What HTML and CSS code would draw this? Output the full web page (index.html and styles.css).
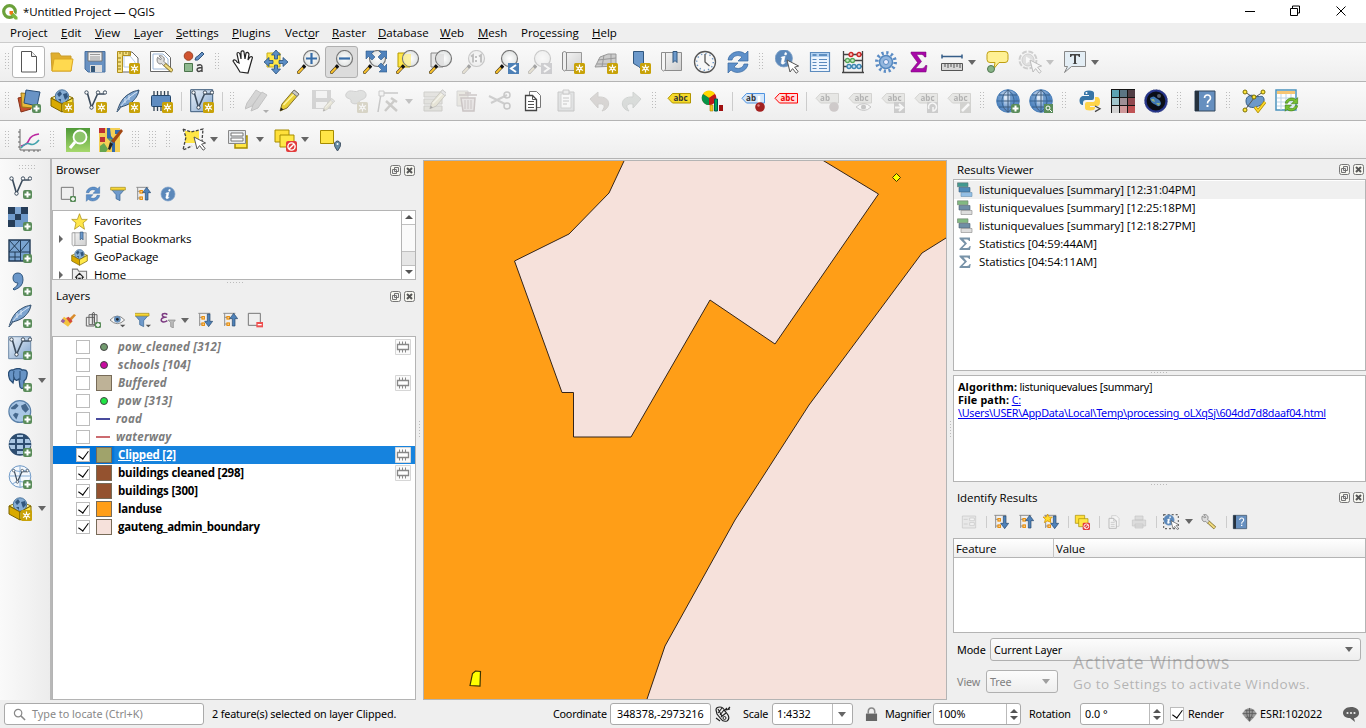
FILE: index.html
```html
<!DOCTYPE html>
<html lang="en">
<head>
<meta charset="utf-8">
<title>*Untitled Project — QGIS</title>
<link rel="stylesheet" href="styles.css">
</head>
<body>
<svg class="defs" aria-hidden="true">
<defs>
<linearGradient id="gBlue" x1="0" y1="0" x2="1" y2="1"><stop offset="0" stop-color="#eef4fb"/><stop offset="1" stop-color="#7fa3cc"/></linearGradient>
<linearGradient id="gGreen" x1="0" y1="0" x2="0" y2="1"><stop offset="0" stop-color="#4f9a38"/><stop offset="1" stop-color="#a6d86c"/></linearGradient>
<linearGradient id="gGrey" x1="0" y1="0" x2="1" y2="1"><stop offset="0" stop-color="#f4f4f4"/><stop offset="1" stop-color="#cfcfcf"/></linearGradient>
<radialGradient id="gLens"><stop offset="0" stop-color="#fff"/><stop offset="1" stop-color="#e0e3e2"/></radialGradient>
<radialGradient id="gGlobe" cx=".4" cy=".35"><stop offset="0" stop-color="#e8f1fb"/><stop offset="1" stop-color="#5b8cc6"/></radialGradient>
<g id="bstar"><rect x="13" y="13" width="11" height="11" rx="1.500" fill="#c8a208"/><path d="M18.500 14.500v8M15 16.500l7 4M22 16.500l-7 4" stroke="#fff" stroke-width="1.200"/><circle cx="18.500" cy="18.500" r="2" fill="#fff"/><circle cx="18.500" cy="18.500" r=".8" fill="#c8a208"/></g>
<g id="bplus"><rect x="15" y="15" width="9" height="9" rx="2" fill="#5a8c5a"/><path d="M19.500 16.500v6M16.500 19.500h6" stroke="#fff" stroke-width="2"/></g>
<g id="handle"><path d="M0.500 23.500L8 15.500" stroke="#3a3018" stroke-width="3.200"/><path d="M1 23L6 17.700" stroke="#f9c22e" stroke-width="2"/><path d="M6 17.500l2-2" stroke="#111" stroke-width="3.200"/></g>
<g id="lens"><use href="#handle"/><circle cx="14.500" cy="8.500" r="8" fill="url(#gLens)" stroke="#777" stroke-width="1.200"/></g>
<g id="cursor"><path d="M12 10l3 12 2.600-3.400 3.600 4.600 2-1.600-3.600-4.400 4-1.200z" fill="#fff" stroke="#555" stroke-width="1"/></g>
<g id="globe"><circle cx="12" cy="12" r="11.300" fill="url(#gGlobe)" stroke="#4a7fb8"/><path d="M12 1v22M1 12h22M3 6h18M3 18h18M12 1c-8 5-8 17 0 22M12 1c8 5 8 17 0 22" fill="none" stroke="#3f5c7c" stroke-width="1"/><path d="M4 5c-4 5-4 9 0 14l4-1V6zM14 3l6 3 2 5-8 6z" fill="#2f6cb0" opacity=".45"/></g>
<g id="world"><circle cx="12" cy="10" r="9.500" fill="#a9c7e6" stroke="#5a80a8"/><path d="M4 7l5-4 2 2-3 3-3 0zM13 5l4-2 3 5-3 3-3-3zM8 11l3 1-2 5-3-4z" fill="#45688d"/></g>
<g id="tag"><path d="M5.500 4.500h18v9.500h-18l-4.500-4.700z"/></g>
<g id="vee"><path d="M4.500 4.500l4 14 6-13.500h7" fill="none" stroke="#3b4b5c" stroke-width="1.600"/><circle cx="3.500" cy="3.500" r="1.700" fill="#fff" stroke="#3b4b5c"/><circle cx="8.500" cy="18.500" r="1.700" fill="#fff" stroke="#3b4b5c"/><circle cx="15" cy="3.500" r="1.700" fill="#fff" stroke="#3b4b5c"/><circle cx="22" cy="3.500" r="1.700" fill="#fff" stroke="#3b4b5c"/></g>
<g id="feather"><path d="M1 23C3 15 7 8 13 5c4-3 7-3 10-4-1 6-4 9-7 12-4 3-8 4-11 5z" fill="#7da4cf" stroke="#34506e"/><path d="M1 23C6 14 13 8 21 3M9 9v5M13 6v5" stroke="#dce8f5" fill="none"/><path d="M1 23l4-6" stroke="#34506e"/></g>
<g id="pencil"><path d="M2 22l2-7L16 1l5 4L9 19z" fill="#e8cf38" stroke="#81702a"/><path d="M5.500 16L18 3" stroke="#fff5a0" stroke-width="1.500"/><path d="M16 1l5 4-2 2.500-5-4z" fill="#c8c8c8" stroke="#777"/><path d="M2 22l1-3.500 2.500 2z" fill="#222"/></g>
<g id="boxg"><path d="M1 9l11-5 11 5-11 5z" fill="#fff3a0" stroke="#8a7000"/><circle cx="12" cy="7.500" r="6.700" fill="#86add4" stroke="#4d769e"/><path d="M7 5l3-3 2 3-3 3zM13 5l4-1 1 4-3 3zM8 10l3 0 0 3z" fill="#31567d"/><path d="M1 9l11 6v8L1 17z" fill="#d9aa00" stroke="#7c6400"/><path d="M12 15l11-6v8l-11 6z" fill="#ffe94a" stroke="#7c6400"/></g>
<g id="tree"><path d="M2 2h18M4 2v19M4 8h4M4 18h4" stroke="#888" stroke-width="1.400" fill="none"/><rect x="7.500" y="7" width="3.500" height="3.500" fill="#fff" stroke="#e88a00" stroke-width="1.800"/><rect x="7.500" y="16.500" width="3.500" height="3.500" fill="#fff" stroke="#e88a00" stroke-width="1.800"/></g>
<g id="down"><use href="#tree"/><path d="M15.500 3h4v11h4l-6 8-6-8h4z" fill="#4f82b9" stroke="#24466b"/></g>
<g id="up"><use href="#tree"/><path d="M15.500 21h4V10h4l-6-8-6 8h4z" fill="#4f82b9" stroke="#24466b"/></g>
<g id="chip"><path d="M5 7V2M8.500 7V2M12 7V2M15.500 7V2M19 7V2M5 22v-5M8.500 22v-5M12 22v-5M15.500 22v-5" stroke="#345" stroke-width="1.300"/><rect x="2.500" y="6.500" width="19" height="11" rx="1" fill="#5f8cc0" stroke="#24466b"/></g>
<g id="cycle"><path d="M2 10C3 2 14-1 19 4l3-3v10H12l4-4C12 4 7 6 6 10z" fill="#5e90ca" stroke="#37679d" stroke-width=".7"/><path d="M22 14c-1 8-12 11-17 6l-3 3V13h10l-4 4c4 3 9 1 10-3z" fill="#5e90ca" stroke="#37679d" stroke-width=".7"/></g>
<g id="funnel"><path d="M2 5h20l-7 8v9l-6-3v-6z" fill="#6f9acb" stroke="#34618f"/><path d="M1 2h22v4H1z" fill="#f6d637" stroke="#a08a13"/></g>
<g id="info"><circle cx="12" cy="12" r="10.500" fill="#5b88ba" stroke="#7fa2c8"/><path d="M13.500 5l2 .5-.6 2.500-2-.5zM9 10.500l4.500-1-1.700 7.500q1 .5 2-.5-1 3-4 2.500-1.300-.5-1-2l1.200-5.500q-.5-.6-1.500-.3z" fill="#fff" stroke="#fff" stroke-width=".7"/></g>
<g id="sheets"><path d="M2 2h14v12H2z" fill="#ffe03a" stroke="#a68c00"/><path d="M7 7h14v12H7z" fill="#ffe846" stroke="#a68c00"/></g>
<g id="ban"><rect x="13" y="13" width="11" height="11" rx="2" fill="#e23b3b"/><circle cx="18.500" cy="18.500" r="3.600" fill="none" stroke="#fff" stroke-width="1.400"/><path d="M16 21l5-5" stroke="#fff" stroke-width="1.400"/></g>
<g id="book"><path d="M2 2h20v20H2z" fill="#668fbf" stroke="#33475c"/><path d="M2 2h4v20H2z" fill="#26323f"/><path d="M11.500 9q0-3 3-3t3 3q0 1.500-1.500 2.500t-1.500 3" fill="none" stroke="#fff" stroke-width="1.600"/><path d="M13.500 16h2v2h-2z" fill="#fff"/></g>
<g id="wrench"><path d="M2 3l4 3 1-1-3-4c5-1 8 3 6 7l3 3-3 3-3-3C3 13 0 8 2 3z" fill="#ddd" stroke="#666"/><path d="M11 12l10 9" stroke="#80702a" stroke-width="5"/><path d="M11.500 12.500l9 8" stroke="#f1db80" stroke-width="3"/></g>
</defs>
<symbol id="new" viewBox="0 0 24 24"><path d="M4.500 1.500h10l5 5v15.500h-15z" fill="#fff" stroke="#555"/><path d="M14.500 1.500v5h5" fill="#eee" stroke="#555"/></symbol>
<symbol id="open" viewBox="0 0 24 24"><path d="M1 3h8l2 3h10v15H2z" fill="#e0ae2e" stroke="#c99c2a"/><path d="M4 9h19l-2 12H2z" fill="#ffd94f" stroke="#dba723"/></symbol>
<symbol id="save" viewBox="0 0 24 24"><path d="M2 1.500h20v20.500H5l-3-3z" fill="#6891c2" stroke="#49719f"/><path d="M5 2h14v9H5z" fill="#eee" stroke="#777"/><path d="M7 4.500h10M7 7h10M7 9h10" stroke="#999"/><path d="M7 15h12v7H7z" fill="#ddd"/><path d="M8 16h4v6H8z" fill="#345779"/></symbol>
<symbol id="layout" viewBox="0 0 24 24"><path d="M5 2h11l6 6v14H5z" fill="#fff" stroke="#666"/><path d="M8 6l6 0 5 6v5H8z" fill="none" stroke="#b6cbe4"/><path d="M1.500 1.500h13v4h-8v17h-5z" fill="#f5df7e" stroke="#b08f1c"/><path d="M4 2v2M7 2v3M10 2v2M13 2v3M2 8h3M2 12h3M2 16h3M2 19h3" stroke="#8c7618"/><use href="#bstar"/></symbol>
<symbol id="layoutmgr" viewBox="0 0 24 24"><path d="M1.500 1.500h14l6 6v14h-20z" fill="#fff" stroke="#666"/><path d="M4 4h10l5 5v10H4z" fill="none" stroke="#9db8d9"/><g transform="translate(7 5) scale(.78)"><use href="#wrench"/></g></symbol>
<symbol id="style" viewBox="0 0 24 24"><circle cx="6.500" cy="6" r="4.300" fill="#d05430" stroke="#9c4224"/><path d="M13 10q0-3 3-4l4-4 2 2-4 4q-2 3-5 2z" fill="#6590c4" stroke="#31577f"/><path d="M2.500 13.500h8v8h-8z" fill="#8fb98f" stroke="#4b744b"/><path d="M15 15.500q5-2 5 1.500v5M20 17.500q-5 0-5 2.500 1 3 5 0" fill="none" stroke="#444" stroke-width="1.400"/></symbol>
<symbol id="hand" viewBox="0 0 24 24"><path d="M9 22l-3-5-4-6c1-2 3-1 4 1l2 1L6 4c0-2 2-2 3 0l1 5V2c1-2 3-1 3 0l1 7 1-6c1-1 2-1 3 1l-1 6 2-3c2-1 3 0 2 2l-2 7-2 7z" fill="#fff" stroke="#222" stroke-width="1.200"/></symbol>
<symbol id="pansel" viewBox="0 0 24 24"><path d="M3 3h13v14H3z" fill="#ffe747" stroke="#c9ae1a"/><g fill="#5b8dc5" stroke="#28507b" stroke-width=".8"><path d="M12 0l4.500 5h-3v4h-3V5h-3z"/><path d="M12 24l4.500-5h-3v-4h-3v4h-3z"/><path d="M0 12l5-4.500v3h4v3H5v3z"/><path d="M24 12l-5-4.500v3h-4v3h4v3z"/></g></symbol>
<symbol id="zin" viewBox="0 0 24 24"><use href="#lens"/><path d="M14.500 3v11M9 8.500h11" stroke="#376da8" stroke-width="2.200"/></symbol>
<symbol id="zout" viewBox="0 0 24 24"><use href="#lens"/><path d="M9 8.500h11" stroke="#376da8" stroke-width="2.200"/></symbol>
<symbol id="zfull" viewBox="0 0 24 24"><use href="#lens"/><path d="M3 1h8L8.500 3.500 12 7 9 10 5.500 6.500 3 9zM24 1h-8l2.500 2.500L15 7l3 3 3.500-3.500L24 9zM24 22h-8l2.500-2.500L15 16l3-3 3.500 3.500L24 14z" fill="#4f82bc" stroke="#2c5786" stroke-width=".6"/></symbol>
<symbol id="zsel" viewBox="0 0 24 24"><path d="M2 3h12v14H2z" fill="#ffe747" stroke="#b69b00"/><use href="#lens"/><path d="M9 4h6v12h-3c-5-2-6-8-3-12z" fill="#fbef8d" opacity=".8"/></symbol>
<symbol id="zlay" viewBox="0 0 24 24"><path d="M2 3h12v14H2z" fill="#e6e6e6" stroke="#888"/><use href="#lens"/><path d="M9 4h6v12h-3c-5-2-6-8-3-12z" fill="#ddd" opacity=".8"/></symbol>
<symbol id="z11" viewBox="0 0 24 24"><use href="#lens"/><path d="M9 6.500l2-1.500v7.500M17 6.500l2-1.500v7.500M14 6v2M14 10v2" fill="none" stroke="#555" stroke-width="1.800"/></symbol>
<symbol id="zlast" viewBox="0 0 24 24"><use href="#lens"/><path d="M13 13h11v11H13z" fill="#4d80b6"/><path d="M21 15l-5 3.500 5 3.500" fill="none" stroke="#fff" stroke-width="2"/></symbol>
<symbol id="znext" viewBox="0 0 24 24"><use href="#lens"/><path d="M13 13h11v11H13z" fill="#88a"/><path d="M16 15l5 3.500-5 3.500" fill="none" stroke="#fff" stroke-width="2"/></symbol>
<symbol id="newmap" viewBox="0 0 24 24"><path d="M3.500 2.500h17v18h-17z" fill="url(#gGrey)" stroke="#999"/><path d="M1.500 2.500q2-2 4 0v17q-2 3-4 0z" fill="#eee" stroke="#888"/><use href="#bstar"/></symbol>
<symbol id="new3d" viewBox="0 0 24 24"><path d="M6 7l8-3h8v12L1 17z" fill="#ccc" stroke="#999"/><path d="M4 10l18-2M3 14h19M10 5L8 17M17 4v13" stroke="#999" fill="none"/><use href="#bstar"/></symbol>
<symbol id="newbm" viewBox="0 0 24 24"><path d="M6.500 1.500h10v19l-5-4-5-3z" fill="#6c99cb" stroke="#31577f"/><use href="#bstar"/></symbol>
<symbol id="bm" viewBox="0 0 24 24"><path d="M3.500 2.500h18v18h-18z" fill="url(#gGrey)" stroke="#8c8c8c"/><path d="M1.500 2.500h4v17q-2 3-4 0z" fill="#f4f4f4" stroke="#8c8c8c"/><path d="M13 1.500h4v11l-2-2-2 2z" fill="#6c99cb" stroke="#31577f"/></symbol>
<symbol id="clock" viewBox="0 0 24 24"><circle cx="12" cy="12" r="10.500" fill="#f7f7f7" stroke="#555" stroke-width="1.300"/><circle cx="12" cy="12" r="8.300" fill="none" stroke="#6e98c6" stroke-dasharray="1.300 3.050" stroke-width="1.500"/><path d="M12 4v8l4.500 4" fill="none" stroke="#555" stroke-width="1.300"/></symbol>
<symbol id="refresh" viewBox="0 0 24 24"><use href="#cycle"/></symbol>
<symbol id="ident" viewBox="0 0 24 24"><g transform="translate(-1 -1.500) scale(.82)"><use href="#info"/></g><use href="#cursor"/></symbol>
<symbol id="table" viewBox="0 0 24 24"><path d="M2.500 2.500h19v19h-19z" fill="#eef5fd" stroke="#5c8bbd" stroke-width="1.200"/><path d="M3 3h18v4H3z" fill="#b3d1f0"/><path d="M4.500 5h4M11 5h8" stroke="#4479b0" stroke-width="1.500"/><path d="M4.500 9.500h4M11 9.500h8M4.500 12.500h4M11 12.500h8M4.500 15.500h4M11 15.500h8M4.500 18.500h4M11 18.500h8" stroke="#5c8bbd"/></symbol>
<symbol id="abacus" viewBox="0 0 24 24"><path d="M2.500 1v21M21.500 1v21M1 22.500h22M3 4.500h18M3 10.500h18M3 16.500h18" stroke="#444" stroke-width="1.300" fill="none"/><g stroke-width="1.300"><g fill="#f7c0bb" stroke="#c22"><circle cx="10" cy="4.500" r="2"/><circle cx="18" cy="4.500" r="2"/></g><g fill="#c9efca" stroke="#58a65b"><circle cx="6.500" cy="10.500" r="2"/><circle cx="11.500" cy="10.500" r="2"/></g><g fill="#c5e1f4" stroke="#3c87b5"><circle cx="8" cy="16.500" r="2"/><circle cx="13" cy="16.500" r="2"/><circle cx="18" cy="16.500" r="2"/></g></g></symbol>
<symbol id="gear" viewBox="0 0 24 24"><circle cx="12" cy="12" r="9.200" fill="none" stroke="#5b8cc5" stroke-width="3.500" stroke-dasharray="2.200 2.616"/><circle cx="12" cy="12" r="6.500" fill="#93b6de" stroke="#5588bf" stroke-width="1.500"/><circle cx="12" cy="12" r="2.500" fill="#eef" stroke="#5588bf"/></symbol>
<symbol id="sum" viewBox="0 0 24 24"><path d="M4 2h15v5h-1.500q-.5-2.500-3-2.500H9.500l5 7-6 7H15q2.500 0 3.500-3H20l-1 6.500H4v-1.500l6.500-8L4 3.500z" fill="#a808a8" stroke="#700070" stroke-width=".5"/></symbol>
<symbol id="measure" viewBox="0 0 24 24"><path d="M2 6.500h20M2 4.500v4M22 4.500v4" stroke="#355d88" stroke-width="1.500"/><path d="M1.500 13.500h21v7h-21z" fill="#d8d8d8" stroke="#555"/><path d="M5 14v3M8 14v4M11 14v3M14 14v4M17 14v3M20 14v4" stroke="#555"/></symbol>
<symbol id="tip" viewBox="0 0 24 24"><path d="M5 1.500h15q3 0 3 3v5q0 3-3 3h-6l-5 6 1-6H5q-3 0-3-3v-5q0-3 3-3z" fill="#fff093" stroke="#bf9f12"/><circle cx="6" cy="19" r="3.500" fill="#86b386" stroke="#527852"/></symbol>
<symbol id="action" viewBox="0 0 24 24"><circle cx="10" cy="10" r="8.500" fill="none" stroke="#888" stroke-width="2" stroke-dasharray="5 1.700"/><circle cx="10" cy="10" r="6" fill="#bbb" stroke="#888"/><path d="M8 6.500l6 3.500-6 3.500z" fill="#fff"/><use href="#cursor"/></symbol>
<symbol id="textann" viewBox="0 0 24 24"><path d="M1.500 1.500h21v15h-14l-7 6 3-6h-3z" fill="#e4eef5" stroke="#888"/><path d="M7 4h10v3h-1l-1-1.500h-2V13l1.500 1H9.500L11 13V5.500H9L8 7H7z" fill="#444"/></symbol>
<symbol id="dsm" viewBox="0 0 24 24"><path d="M1 9l10-2 3 13-10 3z" fill="#c5502d" stroke="#873018"/><path d="M4 4l12 1 0 14-11-1z" fill="#e8b83c" stroke="#9d7514"/><path d="M9 1l14 2-3 14L7 14z" fill="#6993c5" stroke="#2b5078"/><use href="#bplus"/></symbol>
<symbol id="gpkg" viewBox="0 0 24 24"><use href="#boxg"/><use href="#bstar"/></symbol>
<symbol id="gpkg0" viewBox="0 0 24 24"><use href="#boxg"/></symbol>
<symbol id="shp" viewBox="0 0 24 24"><use href="#vee"/><use href="#bstar"/></symbol>
<symbol id="shpadd" viewBox="0 0 24 24"><use href="#vee"/><use href="#bplus"/></symbol>
<symbol id="spat" viewBox="0 0 24 24"><use href="#feather"/><use href="#bstar"/></symbol>
<symbol id="spatadd" viewBox="0 0 24 24"><use href="#feather"/><use href="#bplus"/></symbol>
<symbol id="mem" viewBox="0 0 24 24"><use href="#chip"/><use href="#bstar"/></symbol>
<symbol id="virt" viewBox="0 0 24 24"><path d="M.7.7h22v22H.7z" fill="url(#gBlue)" stroke="#3c5a7b"/><use href="#vee"/><use href="#bstar"/></symbol>
<symbol id="virtadd" viewBox="0 0 24 24"><path d="M.7.7h22v22H.7z" fill="url(#gBlue)" stroke="#6d88a6"/><use href="#vee"/><use href="#bplus"/></symbol>
<symbol id="pencils" viewBox="0 0 24 24"><g fill="#999" stroke="#666"><path d="M0 20l2-6L11 1l5 3L7 17z"/><path d="M6 22l2-6L17 3l5 3-9 13z"/></g><path d="M18 21h6l-3 3z" fill="#333"/></symbol>
<symbol id="edit" viewBox="0 0 24 24"><use href="#pencil"/></symbol>
<symbol id="saveed" viewBox="0 0 24 24"><path d="M1 1h19v19H1z" fill="#999"/><path d="M5 2h11v7H5zM5 13h11v6H5z" fill="#eee"/><g transform="translate(11 9) scale(.6)"><use href="#pencil"/></g></symbol>
<symbol id="addpoly" viewBox="0 0 24 24"><path d="M2 5c3-6 8-1 12-3s9 1 8 5-6 3-7 6-9 2-8-1-7-2-5-7z" fill="#aebcae" stroke="#888"/><use href="#bstar"/></symbol>
<symbol id="vertex" viewBox="0 0 24 24"><path d="M4 5L1 23M7 4h14" stroke="#777" fill="none" stroke-width="1.500"/><path d="M2 2h5v5H2z" fill="#eee" stroke="#777"/><path d="M8 22L18 11M9 12l11 10M14 9l6 4" stroke="#8d846a" stroke-width="2.500"/></symbol>
<symbol id="multi" viewBox="0 0 24 24"><path d="M2 3h18v5H2zM2 10h18v5H2zM2 17h18v5H2z" fill="#c8c49a" stroke="#8f8b60"/><g transform="translate(6 0) scale(.9)"><use href="#pencil"/></g></symbol>
<symbol id="trash" viewBox="0 0 24 24"><path d="M2 2h11v15H2z" fill="#ddd090" stroke="#999"/><path d="M6 9h14l-1 13H8zM4 6h18M10 4h6" fill="#e3c5c5" stroke="#a66" stroke-width="1.500"/><path d="M10 11v9M13 11v9M16 11v9" stroke="#a66"/></symbol>
<symbol id="cut" viewBox="0 0 24 24"><path d="M1 7l16 8M3 14l16-8" stroke="#888" stroke-width="2"/><circle cx="19" cy="6" r="3" fill="none" stroke="#777" stroke-width="1.500"/><circle cx="19" cy="17" r="3" fill="none" stroke="#777" stroke-width="1.500"/></symbol>
<symbol id="copy" viewBox="0 0 24 24"><path d="M8.500 2.500h7l4 4v12h-11z" fill="#fff" stroke="#777"/><path d="M4.500 6.500h7l4 4v11h-11z" fill="#fff" stroke="#444" stroke-width="1.300"/><path d="M11.500 6.500v4h4M7 12.500h6M7 15.500h6M7 18.500h6" stroke="#555" fill="none"/></symbol>
<symbol id="paste" viewBox="0 0 24 24"><path d="M4 3h16v19H4z" fill="#b5c5cc" stroke="#777"/><path d="M7 5h10v14H7z" fill="#fff" stroke="#999"/><path d="M9 1h6v4H9zM9 9h6M9 12h6M9 15h4" fill="#ddd" stroke="#777"/></symbol>
<symbol id="undo" viewBox="0 0 24 24"><path d="M3 10l8-7v5c14-1 13 12 4 14 4-5 2-8-4-7v4z" fill="#b99a87" stroke="#987"/></symbol>
<symbol id="redo" viewBox="0 0 24 24"><path d="M21 10l-8-7v5C-1 7 0 20 9 22c-4-5-2-8 4-7v4z" fill="#9cb6a3" stroke="#798"/></symbol>
<symbol id="diag" viewBox="0 0 24 24"><circle cx="9" cy="9" r="7" fill="#e02020"/><path d="M9 9L3 5A7 7 0 0 1 15 5z" fill="#ffd800"/><path d="M9 9L3 5a7 7 0 0 0 6 11z" fill="#079447"/><path d="M9 9l6-4a7 7 0 0 1-6 11z" fill="#c01818"/><path d="M10 16h3v6h-3z" fill="#f5c518" stroke="#a88400" stroke-width=".6"/><path d="M14.500 10h3v12h-3z" fill="#00a651" stroke="#055"/><path d="M19 16h4v6h-4z" fill="#a01010"/></symbol>
<symbol id="lab" viewBox="0 0 24 24"><use href="#tag" fill="#f5da29" stroke="#b39600"/></symbol>
<symbol id="labpin" viewBox="0 0 24 24"><use href="#tag" fill="#d5e7fa" stroke="#4e93e0"/><path d="M18 7v9" stroke="#fff" stroke-width="2.500"/><circle cx="19" cy="18" r="4.800" fill="#a32121"/><circle cx="17.500" cy="16.500" r="1.200" fill="#e08080"/></symbol>
<symbol id="labred" viewBox="0 0 24 24"><use href="#tag" fill="#fdd" stroke="#f00"/></symbol>
<symbol id="labgrey" viewBox="0 0 24 24"><use href="#tag" fill="#d0cfb6" stroke="#99967a"/></symbol>
<symbol id="labeye" viewBox="0 0 24 24"><use href="#tag" fill="#d0cfb6" stroke="#99967a"/><path d="M8 18q8-7 15 0-7 7-15 0z" fill="#fff" stroke="#777"/><circle cx="15.500" cy="18" r="2.500" fill="#777"/></symbol>
<symbol id="labmove" viewBox="0 0 24 24"><use href="#tag" fill="#d0cfb6" stroke="#99967a"/><path d="M13 13h11v11H13z" fill="#888"/><path d="M14 18.500h7M18 15l4 3.500-4 3.500" stroke="#fff" stroke-width="2" fill="none"/></symbol>
<symbol id="labrot" viewBox="0 0 24 24"><use href="#tag" fill="#d0cfb6" stroke="#99967a"/><path d="M13 13h11v11H13z" fill="#888"/><path d="M15 20a4 4 0 1 1 4 2v-4" stroke="#fff" stroke-width="1.500" fill="none"/></symbol>
<symbol id="labed" viewBox="0 0 24 24"><use href="#tag" fill="#d0cfb6" stroke="#99967a"/><path d="M13 13h11v11H13z" fill="#999880"/><path d="M15 22l7-7" stroke="#fff" stroke-width="2.500"/></symbol>
<symbol id="webadd" viewBox="0 0 24 24"><use href="#globe"/><use href="#bplus"/></symbol>
<symbol id="websearch" viewBox="0 0 24 24"><use href="#globe"/><path d="M15 15h9v9h-9z" fill="#5a8c5a"/><circle cx="19" cy="19" r="2" fill="none" stroke="#fff"/><path d="M20.500 20.500l2.500 2.500" stroke="#fff"/></symbol>
<symbol id="python" viewBox="0 0 24 24"><path d="M6 7V4q0-2.500 5-2.500t5 2.500v5q0 2-2 2H8q-3 0-3 3v2H4q-2.500-1-2.500-4.500T4.500 7H11V6H6z" fill="#3875a6"/><path d="M17 8v3q0 2-3 2H9q-2 0-2 2v4q0 2.500 5 2.500t5-2.500v-1h-5v-1h7q3 0 3-4.500T19 8z" fill="#ffd449"/><circle cx="8.500" cy="3.900" r="1" fill="#fff"/><path d="M17 17l5 2.800-5 2.800" stroke="#444" stroke-width="1.300" fill="none"/></symbol>
<symbol id="grid" viewBox="0 0 24 24"><path d="M0 0h24v24H0z" fill="#151515"/><path d="M1 1h7v7H1z" fill="#5da3b3"/><path d="M9 1h7v7H9z" fill="#5b7584"/><path d="M17 1h7v7h-7z" fill="#513e46"/><path d="M1 9h7v7H1z" fill="#a1c6cd"/><path d="M9 9h7v7H9z" fill="#9f8f96"/><path d="M17 9h7v7h-7z" fill="#914950"/><path d="M1 17h7v7H1z" fill="#d3d3d3"/><path d="M9 17h7v7H9z" fill="#cf989a"/><path d="M17 17h7v7h-7z" fill="#c05355"/></symbol>
<symbol id="earth" viewBox="0 0 24 24"><circle cx="12" cy="12" r="10.500" fill="#0a0e16" stroke="#26348a" stroke-width="2.200"/><circle cx="12" cy="12" r="11.500" fill="none" stroke="#66718f" stroke-width=".8" stroke-dasharray="1 2"/><path d="M6 9q4-3 6 0 5 2 5 6-2 4-5 1-6-2-6-7z" fill="#3f79b4"/><path d="M7 10l3 0 1 3-3-1zM12 14l4 0-1 3z" fill="#8fae80"/><circle cx="15" cy="7" r="2" fill="#545c68"/></symbol>
<symbol id="help" viewBox="0 0 24 24"><use href="#book"/></symbol>
<symbol id="topo" viewBox="0 0 24 24"><path d="M4 12c0-5 5-7 9-5s8-2 9 3-5 7-8 8-10 1-10-6z" fill="#6d99c9" stroke="#385f87"/><path d="M3 3l9 6 9-6M12 9L3 21" stroke="#555" fill="none"/><g fill="#ffe53b" stroke="#7b7000"><circle cx="3" cy="3" r="2"/><circle cx="21" cy="3" r="2"/><circle cx="12" cy="8" r="2"/><circle cx="3" cy="21" r="2"/></g><path d="M13 18l3 4 7-9" stroke="#b09000" stroke-width="3" fill="none"/><path d="M13 18l3 4 7-9" stroke="#ffd92d" stroke-width="1.600" fill="none"/></symbol>
<symbol id="tabref" viewBox="0 0 24 24"><path d="M1 1h20v20H1z" fill="#fff" stroke="#4b93bd" stroke-width="1.500"/><path d="M2 2h18v3H2z" fill="#f6c674"/><path d="M2 9h18M2 13h18M2 17h18M6 5v16M11 5v16M16 5v16" stroke="#bdd5e6"/><g transform="translate(9 8) scale(.62)"><path d="M2 10C3 2 14-1 19 4l3-3v10H12l4-4C12 4 7 6 6 10zM22 14c-1 8-12 11-17 6l-3 3V13h10l-4 4c4 3 9 1 10-3z" fill="#76bf30" stroke="#3c7c13"/></g></symbol>
<symbol id="plot" viewBox="0 0 24 24"><path d="M3 1v21h21M1 4h2M1 9h2M1 14h2M1 19h2M7 22v2M12 22v2M17 22v2M21 22v2" stroke="#666" fill="none"/><path d="M4 18q6-1 8-6t10-6" stroke="#bc28a0" fill="none" stroke-width="1.700"/><path d="M4 20q5-6 9-4t9-4" stroke="#43a3ad" fill="none" stroke-width="1.700"/></symbol>
<symbol id="osm" viewBox="0 0 24 24"><path d="M0 0h24v24H0z" fill="url(#gGreen)"/><circle cx="14" cy="9" r="6.500" fill="#8dc56b" stroke="#fff" stroke-width="1.800"/><path d="M9 14l-5 6" stroke="#fff" stroke-width="3"/></symbol>
<symbol id="qosm" viewBox="0 0 24 24"><path d="M0 0h21v24H0z" fill="#f3cf56"/><path d="M0 0h6v5H0zM1 9h5v5H1z" fill="#be2f35"/><path d="M8 0h3l1 8 4 5v11h-3V15L8 10zM16 2h5v4h-5z" fill="#346bad"/><path d="M1 18l4-3 4 6-2 3H1zM9 10l4 1-1 3z" fill="#66a650"/><path d="M9 21l2-7 3 2-3 6z" fill="#222"/><path d="M12 13L22 1l2 2-9 12z" fill="#a34813"/></symbol>
<symbol id="selrect" viewBox="0 0 24 24"><path d="M3 3h14v12H3z" fill="#ffe646"/><path d="M1 1l8 3 12-3-1 12-2 4M1 1l3 8-3 13 9-4" stroke="#444" fill="none" stroke-dasharray="3 1.500" stroke-width="1.300"/><g transform="translate(0 -1)"><use href="#cursor"/></g></symbol>
<symbol id="selform" viewBox="0 0 24 24"><path d="M8 8h12v12H8z" fill="#ffe646" stroke="#a68c00" stroke-width="1.500"/><path d="M1.500 2.500h17v13h-17z" fill="#e5e8eb" stroke="#888"/><path d="M4 5h12v3H4zM4 10h12v3H4z" fill="#fff" stroke="#777"/></symbol>
<symbol id="desel" viewBox="0 0 24 24"><use href="#sheets"/><use href="#ban"/></symbol>
<symbol id="selloc" viewBox="0 0 24 24"><path d="M2.500 2.500h13v13h-13z" fill="#ffe646" stroke="#a68c00"/><path d="M19.500 23q-4-5-3-8 3-4 6 0 1 3-3 8z" fill="#668ba4" stroke="#456"/><circle cx="19.500" cy="16" r="1" fill="#fff"/></symbol>
<symbol id="rast" viewBox="0 0 24 24"><path d="M0 0h20v20H0z" fill="#6f9acb"/><path d="M5 0h8v7H5zM13 0h7v7h-7z" fill="#7fa6d2"/><path d="M0 0h7v7H0zM13 0h7v7h-7zM7 7h6v6H7zM0 13h7v7H0z" fill="#263d58"/><use href="#bplus"/></symbol>
<symbol id="mesh" viewBox="0 0 24 24"><path d="M1 1h21v21H1z" fill="#79a3d0" stroke="#223a55" stroke-width="1.400"/><path d="M1 13h21M12.500 1v21M1 1l11 12L22 1M1 13L12 1M7 13v9M1 18h11" stroke="#223a55" fill="none"/><use href="#bplus"/></symbol>
<symbol id="csv" viewBox="0 0 24 24"><path d="M5 6q0-5 5-5t5 7-9 10l-1-1q5-3 5-6-5 0-5-5z" fill="#6b97c9" stroke="#31577f"/><use href="#bplus"/></symbol>
<symbol id="pg" viewBox="0 0 24 24"><path d="M2 12C-1 5 1 1 5 2q6-3 9 0c6-1 6 3 4 9l-2 2v6q-2 3-4 0l-1-8q-3 3-5-1l-1 5z" fill="#6793c5" stroke="#294d75" stroke-width="1.300"/><path d="M6 3q-1 4 0 7M12 3v9" stroke="#294d75" fill="none"/><use href="#bplus"/></symbol>
<symbol id="wms" viewBox="0 0 24 24"><g transform="translate(-2 0) scale(1.150)"><use href="#world"/></g><use href="#bplus"/></symbol>
<symbol id="wcs" viewBox="0 0 24 24"><circle cx="12" cy="11.500" r="11.300" fill="#2d4d70"/><path d="M3 6h4v4H1zM9 6h6v4H9zM17 6h4l2 4h-6zM1 12h6v4H3zM9 12h6v4H9zM17 12h6l-2 4h-4zM9 2h6v2H9zM9 18h6v3H9z" fill="#a9c6e3"/><use href="#bplus"/></symbol>
<symbol id="wfs" viewBox="0 0 24 24"><circle cx="12" cy="11.500" r="10.800" fill="#f4f8fc" stroke="#6f99c6"/><path d="M1 11h22M12 1v21M4 4q8 5 16 0M4 19q8-5 16 0" fill="none" stroke="#86add6"/><g transform="translate(3 3) scale(.75)"><use href="#vee"/></g><use href="#bplus"/></symbol>
<symbol id="sqadd" viewBox="0 0 24 24"><path d="M2 2h18v18H2z" fill="none" stroke="#777" stroke-width="1.500"/><use href="#bplus"/></symbol>
<symbol id="sqdel" viewBox="0 0 24 24"><path d="M2 2h18v18H2z" fill="none" stroke="#777" stroke-width="1.500"/><path d="M14 15h10v8H14z" fill="#ee5050"/><path d="M16 19h6" stroke="#fff" stroke-width="2"/></symbol>
<symbol id="filter" viewBox="0 0 24 24"><use href="#funnel"/></symbol>
<symbol id="collapse" viewBox="0 0 24 24"><use href="#up"/></symbol>
<symbol id="expand" viewBox="0 0 24 24"><use href="#down"/></symbol>
<symbol id="expnew" viewBox="0 0 24 24"><use href="#down"/><path d="M7 0l2 4.500 5 0-3.500 3.500 1.500 5-5-3-5 3 1.500-5L0 4.500l5 0z" fill="#ffdc2e" stroke="#d28d00"/></symbol>
<symbol id="infoi" viewBox="0 0 24 24"><use href="#info"/></symbol>
<symbol id="star" viewBox="0 0 24 24"><path d="M12 1l3 8h8l-6 5 2 9-7-5-7 5 2-9-6-5h8z" fill="#ffe64a" stroke="#a68b10"/></symbol>
<symbol id="home" viewBox="0 0 24 24"><path d="M2 3h7l2 3h11v17H2z" fill="#eee" stroke="#777" stroke-width="1.500"/><path d="M6 15l6-6 6 6M8 14v6h3v-4h2v4h3v-6" fill="none" stroke="#222" stroke-width="1.700"/></symbol>
<symbol id="brush" viewBox="0 0 24 24"><path d="M13 11l8-8 3 2-8 9z" fill="#d98b2b"/><path d="M6 7l12 8-6 7L1 14z" fill="#f3c33e"/><path d="M1 14l3-4 4 3-3 4z" fill="#9b5fa5"/><path d="M9 9l4-2 6 7-4 3z" fill="#d34c3c"/></symbol>
<symbol id="group" viewBox="0 0 24 24"><path d="M2 8h12v13H2zM6 4h12v15H6z" fill="#eee" stroke="#666" stroke-width="1.500"/><path d="M11 18V2q3-3 3 0v14" fill="none" stroke="#555" stroke-width="1.500"/><use href="#bplus"/></symbol>
<symbol id="eye" viewBox="0 0 24 24"><path d="M0 12q11-12 22 0-11 11-22 0z" fill="#f5f5f5" stroke="#888" stroke-width="1.500"/><circle cx="11" cy="11" r="5" fill="#638db9"/><circle cx="11" cy="11" r="2" fill="#222"/><path d="M15 19h8l-4 4z" fill="#555"/></symbol>
<symbol id="filtdd" viewBox="0 0 24 24"><g transform="translate(-2 0)"><use href="#funnel"/></g><path d="M16 19h8l-4 4z" fill="#555"/></symbol>
<symbol id="eps" viewBox="0 0 24 24"><path d="M11 4q-3-3-7-1-2 3 3 5-6 1-5 5 3 4 9 0M7 8h3" fill="none" stroke="#7b3980" stroke-width="2.300"/><path d="M12 12h11l-3 4v8l-4-2v-6z" fill="#bbb" stroke="#888"/></symbol>
<symbol id="memchip" viewBox="0 0 16 16"><path d="M.5.5h15v15H.5z" fill="#fafafa" stroke="#d6d6d6"/><path d="M4.500 5V2.500M7.500 5V2.500M10.500 5V2.500M4.500 13.500V11M7.500 13.500V11M10.500 13.500V11" stroke="#888"/><path d="M2.500 5.500h11v5h-11z" fill="#fff" stroke="#888" stroke-width="1.300"/></symbol>
<symbol id="model" viewBox="0 0 16 16"><path d="M.5.800h10.500v4H.5z" fill="#429a91" stroke="#5d7272" stroke-width=".6"/><path d="M2 5.500h11v4.500H2z" fill="#4f8ab9" stroke="#36607f" stroke-width=".6"/><path d="M4 10.500h11v4H4z" fill="#93bfe5" stroke="#6990af" stroke-width=".6"/></symbol>
<symbol id="modelg" viewBox="0 0 16 16"><path d="M.5.800h10.500v4H.5z" fill="#81b981" stroke="#6d7d6d" stroke-width=".6"/><path d="M2 5.500h11v4.500H2z" fill="#6f8ea5" stroke="#4a6070" stroke-width=".6"/><path d="M4 10.500h11v4H4z" fill="#ddd" stroke="#888" stroke-width=".6"/></symbol>
<symbol id="sigma" viewBox="0 0 16 16"><path d="M2.500 1.500h10.500v3.500h-1q-.3-1.500-2-1.500H6.500l3.500 4-4.500 4.500h4.500q2 0 2.700-2h1L13 14H2.500v-1.200l5-5-5-5z" fill="#7893a8"/></symbol>
<symbol id="form" viewBox="0 0 24 24"><path d="M2 3h20v18H2z" fill="#ddd" stroke="#777"/><path d="M4 8h6M4 15h6M13 6h7v4h-7zM13 13h7v4h-7z" stroke="#777" fill="#fff"/></symbol>
<symbol id="print" viewBox="0 0 24 24"><path d="M6 3h12v6H6zM2 9h20v9H2zM6 15h12v6H6z" fill="#bbb" stroke="#777"/></symbol>
<symbol id="selid" viewBox="0 0 24 24"><path d="M1 1h22v21H1z" fill="#eee" stroke="#666" stroke-width="1.700" stroke-dasharray="3 3"/><g transform="translate(0 0) scale(.75)"><use href="#info"/></g><use href="#cursor"/></symbol>
<symbol id="wrenchi" viewBox="0 0 24 24"><use href="#wrench"/></symbol>
<symbol id="float" viewBox="0 0 11 11"><rect x=".5" y=".5" width="10" height="10" rx="2" fill="#f6f6f0" stroke="#777"/><path d="M4.500 2.500h4v4h-4zM2.500 4.500h4v4h-4z" fill="#eee" stroke="#666" stroke-width=".9"/></symbol>
<symbol id="close" viewBox="0 0 11 11"><rect x=".5" y=".5" width="10" height="10" rx="2" fill="#f6f6f0" stroke="#777"/><path d="M3 3l5 5M8 3L3 8" stroke="#555" stroke-width="2"/></symbol>
<symbol id="logo" viewBox="0 0 16 16"><circle cx="7.500" cy="7.500" r="5.800" fill="#fff" stroke="#6ba13a" stroke-width="3.200"/><path d="M8 8h3.500l4.500 4.500V16h-3z" fill="#fff"/><path d="M9 9h2.500l4 4v2.500H13L9 11.500z" fill="#7fb83c"/><path d="M7.500 7h3.500v2.500L9 11 7.500 10z" fill="#ee7913"/></symbol>
<symbol id="search" viewBox="0 0 14 14"><circle cx="5.500" cy="5.500" r="4" fill="none" stroke="#888" stroke-width="1.300"/><path d="M8.500 8.500l4.500 4.500" stroke="#888" stroke-width="1.600"/></symbol>
<symbol id="mouse" viewBox="0 0 16 16"><path d="M1 4q0-3 4-3 3 0 5 4l3 4q2 4-1 6-4 1-6-2L2 8z" fill="#eee" stroke="#222" stroke-width="1.200"/><path d="M3 7l4-5M5 9l4-5M6 11l5-4M3 3l4 7M1 12l4 3M9 5l3-3M13 3l2-2M11 4l4-1" stroke="#222" stroke-width="1.100"/><circle cx="9.500" cy="12" r="1.500" fill="none" stroke="#222"/></symbol>
<symbol id="lock" viewBox="0 0 14 16"><path d="M3.500 7V5q0-4 3.500-4t3.500 4v2" fill="none" stroke="#888" stroke-width="1.700"/><path d="M1 7h12v8H1z" fill="#666"/></symbol>
<symbol id="crs" viewBox="0 0 16 16"><path d="M0 7l3.500-4Q8-1 12.500 3L16 7l-4 5-4 4-4-4z" fill="#999"/><path d="M1 7h14M3 3.500h10M4 11h8M8 1v14M5 3q-1 5 3 12M11 3q1 5-3 12" stroke="#555" fill="none" stroke-width=".8"/></symbol>
<symbol id="msg" viewBox="0 0 16 16"><path d="M8 1c5 0 8 2.500 8 6s-3 5-5 5l1 4-5-4c-4 0-7-2-7-5s3-6 8-6z" fill="#5e5e5e"/><circle cx="4.500" cy="7" r="1.100" fill="#eee"/><circle cx="8" cy="7" r="1.100" fill="#eee"/><circle cx="11.500" cy="7" r="1.100" fill="#eee"/></symbol>
</svg>

<header class="titlebar">
<svg class="logo"><use href="#logo"/></svg><span class="apptitle">*Untitled Project — QGIS</span>
<svg class="winbtns" viewBox="0 0 110 12"><path d="M1 6.500h10M46.500 3.500h7v7h-7zM48.500 3v-2h7v7h-2M92.500 1.500l9 9M101.500 1.500l-9 9" fill="none" stroke="#000"/></svg>
</header>
<nav class="menubar"><span>Pro<u>j</u>ect</span><span><u>E</u>dit</span><span><u>V</u>iew</span><span><u>L</u>ayer</span><span><u>S</u>ettings</span><span><u>P</u>lugins</span><span>Vect<u>o</u>r</span><span><u>R</u>aster</span><span><u>D</u>atabase</span><span><u>W</u>eb</span><span><u>M</u>esh</span><span>Pro<u>c</u>essing</span><span><u>H</u>elp</span></nav>

<div class="toolbar">
<i class="h first"></i><b class="raised"><svg><use href="#new"/></svg></b><b><svg><use href="#open"/></svg></b><b><svg><use href="#save"/></svg></b><b><svg><use href="#layout"/></svg></b><b><svg><use href="#layoutmgr"/></svg></b><b><svg><use href="#style"/></svg></b>
<i class="h"></i><b><svg><use href="#hand"/></svg></b><b><svg><use href="#pansel"/></svg></b><b><svg><use href="#zin"/></svg></b><b class="pressed"><svg><use href="#zout"/></svg></b><b><svg><use href="#zfull"/></svg></b><b><svg><use href="#zsel"/></svg></b><b><svg><use href="#zlay"/></svg></b><b class="off"><svg><use href="#z11"/></svg></b><b><svg><use href="#zlast"/></svg></b><b class="off"><svg><use href="#znext"/></svg></b><b><svg><use href="#newmap"/></svg></b><b><svg><use href="#new3d"/></svg></b><b><svg><use href="#newbm"/></svg></b><b><svg><use href="#bm"/></svg></b><b><svg><use href="#clock"/></svg></b><b><svg><use href="#refresh"/></svg></b>
<i class="h"></i><b><svg><use href="#ident"/></svg></b><b><svg><use href="#table"/></svg></b><b><svg><use href="#abacus"/></svg></b><b><svg><use href="#gear"/></svg></b><b><svg><use href="#sum"/></svg></b><b><svg><use href="#measure"/></svg></b><i class="dd"></i><b><svg><use href="#tip"/></svg></b><b class="off"><svg><use href="#action"/></svg></b><i class="dd off"></i><b><svg><use href="#textann"/></svg></b><i class="dd"></i>
</div>
<div class="toolbar second">
<i class="h first"></i><b><svg><use href="#dsm"/></svg></b><b><svg><use href="#gpkg"/></svg></b><b><svg><use href="#shp"/></svg></b><b><svg><use href="#spat"/></svg></b><b><svg><use href="#mem"/></svg></b><i class="s"></i><b><svg><use href="#virt"/></svg></b><i class="s"></i>
<i class="h narrow"></i><b class="off"><svg><use href="#pencils"/></svg></b><b><svg><use href="#edit"/></svg></b><b class="off"><svg><use href="#saveed"/></svg></b><b class="off"><svg><use href="#addpoly"/></svg></b><b class="off"><svg><use href="#vertex"/></svg></b><i class="dd off"></i><b class="off"><svg><use href="#multi"/></svg></b><b class="off"><svg><use href="#trash"/></svg></b><b class="off"><svg><use href="#cut"/></svg></b><b><svg><use href="#copy"/></svg></b><b class="off"><svg><use href="#paste"/></svg></b><b class="off"><svg><use href="#undo"/></svg></b><b class="off"><svg><use href="#redo"/></svg></b>
<i class="h narrow"></i><b><svg viewBox="0 0 24 24"><use href="#lab"/><text x="13.500" y="12" class="abc">abc</text></svg></b><b><svg><use href="#diag"/></svg></b><i class="s"></i><b><svg viewBox="0 0 24 24"><use href="#labpin"/><text x="10" y="12" class="abc">ab</text></svg></b><b><svg viewBox="0 0 24 24"><use href="#labred"/><text x="13.500" y="12" class="abc red">abc</text></svg></b><i class="s"></i><b class="off"><svg viewBox="0 0 24 24"><use href="#labgrey"/><text x="10" y="12" class="abc">ab</text><circle cx="19" cy="18" r="4.800" fill="#a77"/></svg></b><b class="off"><svg viewBox="0 0 24 24"><use href="#labeye"/><text x="13.500" y="12" class="abc">abc</text></svg></b><b class="off"><svg viewBox="0 0 24 24"><use href="#labmove"/><text x="13.500" y="12" class="abc">abc</text></svg></b><b class="off"><svg viewBox="0 0 24 24"><use href="#labrot"/><text x="13.500" y="12" class="abc">abc</text></svg></b><b class="off"><svg viewBox="0 0 24 24"><use href="#labed"/><text x="13.500" y="12" class="abc">abc</text></svg></b>
<i class="h"></i><b><svg><use href="#webadd"/></svg></b><b><svg><use href="#websearch"/></svg></b>
<i class="h"></i><b><svg><use href="#python"/></svg></b><b><svg><use href="#grid"/></svg></b><b><svg><use href="#earth"/></svg></b>
<i class="h"></i><b><svg><use href="#help"/></svg></b>
<i class="h"></i><b><svg><use href="#topo"/></svg></b><b><svg><use href="#tabref"/></svg></b>
</div>
<div class="toolbar third">
<i class="h first"></i><b><svg><use href="#plot"/></svg></b>
<i class="h"></i><b><svg><use href="#osm"/></svg></b><b><svg><use href="#qosm"/></svg></b>
<i class="h wide"></i><i class="h wide"></i><i class="h"></i><b><svg><use href="#selrect"/></svg></b><i class="dd"></i><b><svg><use href="#selform"/></svg></b><i class="dd"></i><b><svg><use href="#desel"/></svg></b><i class="dd"></i><b><svg><use href="#selloc"/></svg></b>
</div>

<main class="work">
<aside class="side">
<i class="dots"></i>
<div><svg><use href="#shpadd"/></svg></div><div><svg><use href="#rast"/></svg></div><div><svg><use href="#mesh"/></svg></div><div><svg><use href="#csv"/></svg></div><div><svg><use href="#spatadd"/></svg></div><div><svg><use href="#virtadd"/></svg></div><div><svg><use href="#pg"/></svg><i class="dd"></i></div><div><svg><use href="#wms"/></svg></div><div><svg><use href="#wcs"/></svg></div><div><svg><use href="#wfs"/></svg></div><div><svg><use href="#gpkg"/></svg><i class="dd"></i></div>
</aside>

<section class="leftdock">
<div class="dockhead"><span>Browser</span><svg><use href="#float"/></svg><svg><use href="#close"/></svg></div>
<div class="minibar"><svg><use href="#sqadd"/></svg><svg><use href="#refresh"/></svg><svg><use href="#filter"/></svg><svg><use href="#collapse"/></svg><svg><use href="#infoi"/></svg></div>
<div class="browser">
<div class="tree">
<p><i></i><svg><use href="#star"/></svg><span>Favorites</span></p>
<p><i class="tri"></i><svg><use href="#bm"/></svg><span>Spatial Bookmarks</span></p>
<p><i></i><svg><use href="#gpkg0"/></svg><span>GeoPackage</span></p>
<p><i class="tri"></i><svg><use href="#home"/></svg><span>Home</span></p>
</div>
<div class="scroll"><i class="up"></i><div class="thumb"></div><div class="track"></div><i class="dn"></i></div>
</div>
<div class="split"><i class="dots"></i></div>
<div class="dockhead"><span>Layers</span><svg><use href="#float"/></svg><svg><use href="#close"/></svg></div>
<div class="minibar lay"><svg><use href="#brush"/></svg><svg><use href="#group"/></svg><svg><use href="#eye"/></svg><svg><use href="#filtdd"/></svg><svg><use href="#eps"/></svg><i class="dd"></i><svg><use href="#expand"/></svg><svg><use href="#collapse"/></svg><svg><use href="#sqdel"/></svg></div>
<div class="layers">
<div class="row dim"><i class="cb"></i><i class="dot d1"></i><span>pow_cleaned [312]</span><svg><use href="#memchip"/></svg></div>
<div class="row dim"><i class="cb"></i><i class="dot d2"></i><span>schools [104]</span></div>
<div class="row dim"><i class="cb"></i><i class="sw w1"></i><span>Buffered</span><svg><use href="#memchip"/></svg></div>
<div class="row dim"><i class="cb"></i><i class="dot d3"></i><span>pow [313]</span></div>
<div class="row dim"><i class="cb"></i><i class="ln l1"></i><span>road</span></div>
<div class="row dim"><i class="cb"></i><i class="ln l2"></i><span>waterway</span></div>
<div class="row sel"><i class="cb on"></i><i class="sw w2"></i><span>Clipped [2]</span><svg><use href="#memchip"/></svg></div>
<div class="row"><i class="cb on"></i><i class="sw w3"></i><span>buildings cleaned [298]</span><svg><use href="#memchip"/></svg></div>
<div class="row"><i class="cb on"></i><i class="sw w3"></i><span>buildings [300]</span></div>
<div class="row"><i class="cb on"></i><i class="sw w4"></i><span>landuse</span></div>
<div class="row"><i class="cb on"></i><i class="sw w5"></i><span class="tight">gauteng_admin_boundary</span></div>
</div>
</section>

<div class="vsplit left"><i class="vdots"></i></div>
<svg class="map" viewBox="424 161 522 538">
<path d="M424 161h522v538H424z" fill="#ff9e17"/>
<g fill="#f6e1db" stroke="#35251a" stroke-width="1"><path d="M626 155l-2 6-15 32-40 41-54.500 27 47.500 131.500h11.500V437H631l79-137 65 44L878.500 194 824 161l-10-6z"/><path d="M952 234.500l-6 3.500-24 15-113 152-74 115-70 126-20 59h307z"/></g>
<path d="M896.500 173.500l4 4-4 4-4-4z" fill="#ff0" stroke="#3c3400"/><path d="M470 685.500l2.500-12 3-2.500 5 .5-.500 14.500z" fill="#ff0" stroke="#3c3400" stroke-width="1.200"/>
</svg>
<div class="vsplit"><i class="vdots"></i></div>

<section class="rightdock">
<div class="dockhead"><span>Results Viewer</span><svg><use href="#float"/></svg><svg><use href="#close"/></svg></div>
<div class="results">
<p class="cur"><svg><use href="#model"/></svg><span>listuniquevalues [summary] [12:31:04PM]</span></p>
<p><svg><use href="#modelg"/></svg><span>listuniquevalues [summary] [12:25:18PM]</span></p>
<p><svg><use href="#modelg"/></svg><span>listuniquevalues [summary] [12:18:27PM]</span></p>
<p><svg><use href="#sigma"/></svg><span>Statistics [04:59:44AM]</span></p>
<p><svg><use href="#sigma"/></svg><span>Statistics [04:54:11AM]</span></p>
</div>
<div class="split5"><i class="dots"></i></div>
<div class="detail"><strong>Algorithm:</strong> listuniquevalues [summary]<br><strong>File path:</strong> <a>C:</a><br><a>\Users\USER\AppData\Local\Temp\processing_oLXqSj\604dd7d8daaf04.html</a></div>
<div class="split6"><i class="dots"></i></div>
<div class="dockhead"><span>Identify Results</span><svg><use href="#float"/></svg><svg><use href="#close"/></svg></div>
<div class="idbar"><svg class="off"><use href="#form"/></svg><i class="s"></i><svg><use href="#expand"/></svg><svg><use href="#collapse"/></svg><svg><use href="#expnew"/></svg><i class="s"></i><svg><use href="#desel"/></svg><i class="s"></i><svg class="off"><use href="#copy"/></svg><svg class="off"><use href="#print"/></svg><i class="s"></i><svg><use href="#selid"/></svg><i class="dd"></i><svg><use href="#wrenchi"/></svg><i class="s"></i><svg><use href="#help"/></svg></div>
<div class="idtable"><div class="th"><span>Feature</span><span>Value</span></div></div>
<div class="moderow"><label>Mode</label><div class="combo"><span>Current Layer</span><i class="dd"></i></div></div>
<div class="viewrow"><label>View</label><div class="combo"><span>Tree</span><i class="dd"></i></div></div>
<div class="watermark"><div class="wm1">Activate Windows</div><div class="wm2">Go to Settings to activate Windows.</div></div>
</section>
</main>

<footer class="status">
<div class="box locate"><svg><use href="#search"/></svg><span>Type to locate (Ctrl+K)</span></div>
<span class="msg">2 feature(s) selected on layer Clipped.</span>
<span class="lc">Coordinate</span><div class="box coord">348378,-2973216</div><svg class="ms"><use href="#mouse"/></svg>
<span class="ls">Scale</span><div class="box scale"><span>1:4332</span><i class="dd"></i></div><svg class="lk"><use href="#lock"/></svg>
<span class="lm">Magnifier</span><div class="box mag"><span>100%</span><em><i class="up"></i><i class="dn"></i></em></div>
<span class="lr">Rotation</span><div class="box rot"><span>0.0 °</span><em><i class="up"></i><i class="dn"></i></em></div>
<i class="cb on"></i><span class="lre">Render</span><svg class="cr"><use href="#crs"/></svg><span class="le">ESRI:102022</span><svg class="mg"><use href="#msg"/></svg>
</footer>
</body>
</html>
```

FILE: styles.css
```css
* { box-sizing: border-box; }
body { margin: 0; width: 1366px; height: 728px; overflow: hidden; background: #efefef; color: #000; font: 11.5px/18px "Open Sans", "Noto Sans", sans-serif; display: flex; flex-direction: column; }
p { margin: 0; }
i { font-style: normal; display: block; flex: none; }
svg { display: block; flex: none; }
span { white-space: nowrap; }
.defs { position: absolute; width: 0; height: 0; overflow: hidden; }
.abc { font: bold 8px "Open Sans", sans-serif; text-anchor: middle; fill: #333; }
.abc.red { fill: #e00; }
.off { opacity: .35; filter: grayscale(.75); }

.titlebar { height: 23px; flex: none; background: #fff; display: flex; align-items: center; padding-left: 2px; }
.logo { width: 16px; height: 16px; margin-right: 5px; }
.apptitle { letter-spacing: -.1px; }
.winbtns { width: 110px; height: 12px; margin: 0 12px 1px auto; }
.menubar { height: 19px; flex: none; display: grid; grid-template-columns: 51px 34px 39px 42px 56px 53px 47px 46px 62px 38px 43px 71px 60px; padding-left: 10px; line-height: 20px; }
u { text-underline-offset: 1px; }

.toolbar { height: 39px; flex: none; display: flex; align-items: center; border-top: 1px solid #ccc; background: linear-gradient(#fafafa, #eee); }
.toolbar.second, .toolbar.third { border-top-color: #b4b4b4; }
.toolbar.third { border-bottom: 1px solid #b4b4b4; }
.toolbar b { width: 33px; height: 32px; flex: none; display: flex; align-items: center; justify-content: center; border: 1px solid transparent; border-radius: 3px; }
.toolbar b svg { width: 24px; height: 24px; }
.toolbar b.raised { background: #fff; border-color: #b5b5b5; }
.toolbar b.pressed { background: #dcdcdc; border-color: #b0b0b0; }
.h, .side .dots { background: conic-gradient(at 1px 1px, transparent 75%, #bcbcbc 0) 0 0 / 3px 3px content-box; background-clip: content-box; }
.h { width: 16px; height: 18px; padding: 0 5px; }
.h.first { width: 12px; padding: 0 1px 0 5px; }
.h.wide { width: 17px; }
.h.narrow { width: 14px; padding: 0 4px; }
.s { width: 8px; height: 19px; border-left: 1px solid #ccc; margin-left: 4px; margin-right: -4px; }
.dd { width: 12px; height: 5px; }
.third .dd { width: 12.500px; }
.dd::before { content: ""; display: block; width: 0; border: 4px solid transparent; border-top: 5px solid #666; border-bottom: 0; }
.dots { width: 17px; height: 1px; background: repeating-linear-gradient(90deg, #bbb 0 1px, transparent 1px 3px); }
.vdots { height: 17px; width: 1px; background: repeating-linear-gradient(#bbb 0 1px, transparent 1px 3px); }

.work { height: 541px; flex: none; display: flex; }
.side { width: 52px; border-right: 2px solid #b8b8b8; background: linear-gradient(90deg, #fafafa, #ececec); padding-top: 6px; }
.side .dots { margin-left: 19px; height: 5px; margin-bottom: 1px; }
.side div { height: 32.200px; display: flex; align-items: center; padding-left: 8px; }
.side div svg { width: 24px; height: 24px; margin-right: 6px; }

.leftdock { width: 364px; margin-left: 0; padding-right: 0; display: flex; flex-direction: column; }
.dockhead { height: 22px; flex: none; display: flex; align-items: center; padding-left: 4px; padding-right: 1px; }
.dockhead span { margin-right: auto; letter-spacing: -.1px; }
.dockhead svg { width: 11px; height: 11px; margin-left: 3px; }
.minibar { height: 29px; flex: none; display: flex; align-items: center; gap: 9px; padding: 0 0 3px 8px; }
.minibar svg { width: 16px; height: 16px; }
.browser { height: 70px; flex: none; border: 1px solid #b4b4b4; background: #fff; display: flex; overflow: hidden; }
.tree { flex: 1; padding-top: 1px; }
.tree p { height: 18px; display: flex; align-items: center; }
.tree span, .results span { letter-spacing: -.13px; }
.tree i { width: 18px; padding-left: 6px; }
.tri::before { content: ""; display: block; width: 0; border: 4px solid transparent; border-left: 4px solid #666; border-right: 0; }
.tree svg { width: 17px; height: 17px; margin-right: 6px; }
.scroll { width: 14px; border-left: 1px solid #b4b4b4; display: flex; flex-direction: column; align-items: center; }
.scroll .up, .scroll .dn { height: 13px; padding-top: 4px; }
.up::before { content: ""; display: block; width: 0; border: 4px solid transparent; border-bottom: 4px solid #555; border-top: 0; }
.dn::before { content: ""; display: block; width: 0; border: 4px solid transparent; border-top: 4px solid #555; border-bottom: 0; }
.thumb { width: 13px; height: 28px; border: solid #c0c0c0; border-width: 1px 0; background: #fafafa; }
.track { width: 13px; flex: 1; background: #e6e6e6; border-bottom: 1px solid #c0c0c0; }
.split { height: 5px; flex: none; padding: 2px 0 0 175px; }
.minibar.lay .dd { margin-left: -4px; width: 11px; margin-right: -4px; }
.layers { flex: 1; border: 1px solid #b4b4b4; background: #fff; font-weight: bold; padding-top: 1px; }
.row { height: 18px; display: flex; align-items: center; padding-left: 23px; }
.row span { margin-right: auto; letter-spacing: -.2px; }
.row span.tight { letter-spacing: -.3px; }
.row > svg { width: 16px; height: 16px; margin-right: 4px; }
.row.dim span { color: #7c7c7c; font-style: italic; letter-spacing: .22px; }
.cb { width: 14px; height: 14px; border: 1px solid #bcbcbc; background: #fff; }
.row .cb { margin-right: 6px; }
.cb.on::before { content: ""; display: block; width: 4.500px; height: 9px; border: solid #000; border-width: 0 1.800px 1.800px 0; transform: translate(3.500px, -.3px) rotate(36deg); }
.dot { width: 8px; height: 8px; border: 1px solid #444; border-radius: 50%; margin: 0 10px 0 4px; }
.d1 { background: #729b6f; } .d2 { background: #c80aa0; } .d3 { background: #1fe544; }
.sw { width: 16px; height: 16px; border: 1px solid #776b58; margin-right: 6px; }
.w1 { background: #beb297; } .w2 { background: #a0a36b; } .w3 { background: #94522f; } .w4 { background: #ff9e17; } .w5 { background: #f6e1db; }
.ln { width: 14px; height: 2px; margin-right: 6px; }
.l1 { background: #494b9d; } .l2 { background: #cc6b70; }
.row.sel { background: linear-gradient(90deg, #0073d8 0 60px, #1683de 62px); color: #fff; text-decoration: underline; }

.vsplit { width: 6px; display: flex; align-items: center; justify-content: center; }
.vsplit.left { width: 7px; }
.map { width: 524px; height: 540px; border: 1px solid #b4b4b4; margin-top: 1px; }

.rightdock { width: 413px; display: flex; flex-direction: column; }
.rightdock .dockhead { height: 20px; padding: 1px 2px 0 4px; }
.results { height: 192px; flex: none; border: 1px solid #b4b4b4; background: #fff; padding-top: 1px; }
.results p { height: 18px; display: flex; align-items: center; padding-left: 3px; }
.results p.cur { background: #f0f0f0; }
.results svg { width: 16px; height: 16px; margin-right: 6px; }
.split5 { height: 4px; flex: none; padding: 1px 0 0 198px; }
.detail { height: 107px; flex: none; border: 1px solid #b4b4b4; background: #fff; font: 10.800px/13px "Noto Sans", sans-serif; letter-spacing: -.29px; padding: 4px; white-space: nowrap; }
.detail strong { letter-spacing: .15px; }
.detail a { color: #00e; text-decoration: underline; }
.split6 { height: 5px; flex: none; padding: 2px 0 0 198px; }
.idbar { height: 31px; flex: none; display: flex; align-items: center; padding: 0 0 2px 8px; }
.idbar svg { width: 16px; height: 16px; margin-right: 9px; }
.idbar .s { width: 1px; margin: 0 5.700px 0 0; height: 12px; }
.idbar .dd { margin-left: -3px; width: 16px; }
.idtable { height: 95px; flex: none; border: 1px solid #b4b4b4; background: #fff; }
.th { display: grid; grid-template-columns: 99px 1fr; height: 19px; border-bottom: 1px solid #b4b4b4; background: linear-gradient(#fff, #eee); line-height: 19px; letter-spacing: -.1px; }
.th span { padding-left: 2px; }
.th span + span { border-left: 1px solid #c4c4c4; }
.moderow, .viewrow { display: flex; align-items: center; font: 10.800px/16px "Noto Sans", sans-serif; letter-spacing: -.1px; padding-left: 4px; }
.moderow { padding-top: 5px; }
.moderow label { width: 33px; }
.combo { flex: none; width: 371px; height: 23px; border: 1px solid #b0b0b0; border-radius: 3px; background: linear-gradient(#fcfcfc, #eee); display: flex; align-items: center; justify-content: space-between; padding: 0 3px; }
.viewrow { padding-top: 9px; color: #808080; }
.viewrow label { width: 29px; }
.viewrow .combo { width: 72px; }
.viewrow .dd { opacity: .6; }
.watermark { width: 260px; height: 44px; margin: -42px 0 0 120px; position: relative; color: rgba(120,120,120,.5); white-space: nowrap; line-height: 22px; }
.wm1 { font-size: 17.500px; letter-spacing: .85px; }
.wm2 { font-size: 13.500px; letter-spacing: .45px; }

.status { height: 28px; flex: none; display: flex; align-items: center; padding-left: 4px; font: 10.800px/16px "Noto Sans", sans-serif; }
.box { height: 22px; flex: none; border: 1px solid #aaa; border-radius: 3px; background: #fff; display: flex; align-items: center; }
.locate { width: 200px; color: #888; padding-left: 8px; margin-right: 8px; }
.locate svg { width: 13px; height: 13px; margin-right: 6px; }
.msg { width: 341px; letter-spacing: -.15px; }
.lc { width: 57px; letter-spacing: -.25px; }
.coord { width: 101px; padding-left: 6px; margin-right: 4px; }
.ms { width: 16px; height: 16px; margin-right: 12px; }
.ls { width: 29px; letter-spacing: -.15px; }
.scale { width: 81px; padding-left: 4px; justify-content: space-between; margin-right: 12px; }
.scale .dd { height: 20px; width: 20px; border-left: 1px solid #bbb; padding: 8px 0 0 5px; }
.lk { width: 13px; height: 15px; margin-right: 7px; }
.lm { width: 48px; letter-spacing: -.35px; }
.mag { width: 88px; margin-right: 8px; padding-left: 4px; justify-content: space-between; }
.rot { width: 84px; margin-right: 6px; padding-left: 4px; justify-content: space-between; }
.lr { width: 51px; letter-spacing: -.15px; }
em { width: 14px; height: 20px; border-left: 1px solid #bbb; display: flex; flex-direction: column; align-items: center; justify-content: center; gap: 3px; }
.status .cb { margin-right: 4px; }
.lre { width: 54px; letter-spacing: -.15px; }
.cr { width: 15px; height: 15px; margin-right: 3px; }
.le { width: 83px; }
.mg { width: 16px; height: 16px; }
```
